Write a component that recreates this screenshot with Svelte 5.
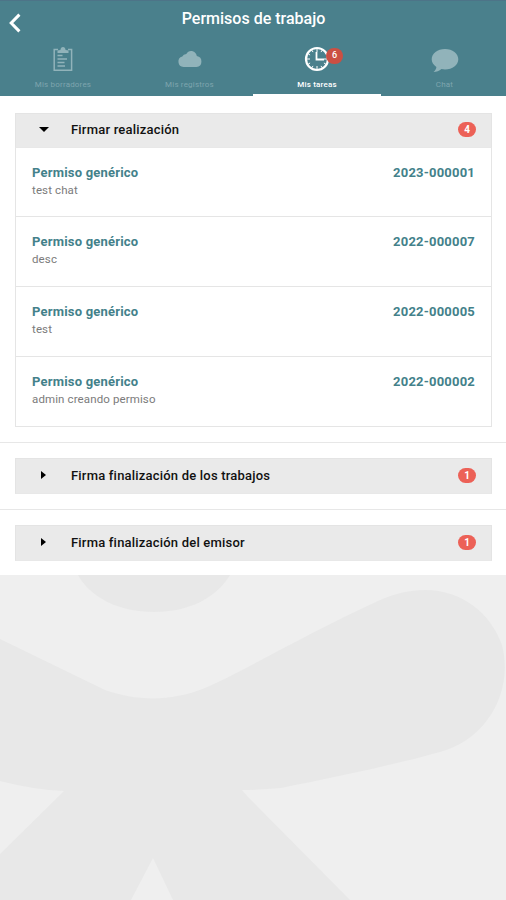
<script lang="ts">
  type Permit = { code: string; note: string };
  type Group = { title: string; count: number; open: boolean; permits: Permit[] };

  const tabs = [
    { id: 'drafts', label: 'Mis borradores', count: 0 },
    { id: 'records', label: 'Mis registros', count: 0 },
    { id: 'tasks', label: 'Mis tareas', count: 6 },
    { id: 'chat', label: 'Chat', count: 0 },
  ];

  let active = $state('tasks');

  let groups: Group[] = $state([
    {
      title: 'Firmar realización',
      count: 4,
      open: true,
      permits: [
        { code: '2023-000001', note: 'test chat' },
        { code: '2022-000007', note: 'desc' },
        { code: '2022-000005', note: 'test' },
        { code: '2022-000002', note: 'admin creando permiso' },
      ],
    },
    { title: 'Firma finalización de los trabajos', count: 1, open: false, permits: [] },
    { title: 'Firma finalización del emisor', count: 1, open: false, permits: [] },
  ]);
</script>

<div class="app">
  <header>
    <div class="bar">
      <button class="back" aria-label="Volver">
        <svg width="12" height="20" viewBox="0 0 12 20"><path d="M10.4 1.6 2.2 10l8.2 8.4" /></svg>
      </button>
      <h1>Permisos de trabajo</h1>
    </div>

    <nav>
      {#each tabs as tab (tab.id)}
        <button class="tab" class:active={active === tab.id} onclick={() => (active = tab.id)}>
          <span class="icon">
            {#if tab.id === 'drafts'}
              <svg width="20" height="26" viewBox="0 0 20 26">
                <path class="line" d="M5 3.5H1.2v20.8h17.4V3.5H15" />
                <path d="M4.5 7V4.400l2.900-.5C7.700 2 8.500 1 10 1s2.300 1 2.600 2.900l2.900.5V7z" />
                <path class="line" d="M4.500 9.500h5M4.500 13h9.500M4.500 16.500h7M4.500 20h7.500" />
              </svg>
            {:else if tab.id === 'records'}
              <svg width="24" height="26" viewBox="0 0 24 26">
                <path d="M5.500 21A5.300 5.300 0 0 1 4.300 10.600 4.400 4.400 0 0 1 8.300 7.900C9.400 6 11 5 13 5c3 0 5.400 2.200 5.800 5.100A5.500 5.500 0 0 1 18.500 21z" />
              </svg>
            {:else if tab.id === 'tasks'}
              <svg width="26" height="26" viewBox="0 0 26 26">
                <circle class="ring" cx="13" cy="13" r="11" />
                <path class="ticks" d="M13 3v3M13 20v3M3 13h3M20 13h3M8 4.300l1 1.800M18 4.300l-1 1.800M4.300 8l1.800 1M4.300 18l1.800-1M8 21.700l1-1.800M18 21.700l-1-1.800M21.700 18l-1.800-1" />
                <path class="hands" d="M12.500 6v7.500H20" />
              </svg>
            {:else}
              <svg width="28" height="26" viewBox="0 0 28 26">
                <path d="M14 3c7.500 0 13.300 4.600 13.300 10.300S21.500 23.500 14 23.500c-1.200 0-2.400-.1-3.500-.4-2.300 2-5 3-8 3 1.600-1.500 2.700-3 2.900-5.200C2.400 19 .700 16.300.700 13.300.700 7.600 6.500 3 14 3z" />
              </svg>
            {/if}
            {#if tab.count}<span class="badge">{tab.count}</span>{/if}
          </span>
          <span class="label">{tab.label}</span>
        </button>
      {/each}
    </nav>
  </header>

  <main>
    {#each groups as group (group.title)}
      <section>
        <button class="head" onclick={() => (group.open = !group.open)}>
          <span class="arrow" class:open={group.open}></span>
          <span class="title">{group.title}</span>
          <span class="count">{group.count}</span>
        </button>
        {#if group.open}
          <ul>
            {#each group.permits as permit (permit.code)}
              <li>
                <div class="row">
                  <span class="kind">Permiso genérico</span>
                  <span class="code">{permit.code}</span>
                </div>
                <p>{permit.note}</p>
              </li>
            {/each}
          </ul>
        {/if}
      </section>
    {/each}
  </main>

  <div class="backdrop">
    <svg width="506" height="325" viewBox="0 0 506 325">
      <path d="M78 0C91 23 119 37 154 37S216 23 230 0z" />
      <path d="M0 64 105 115C137 126 170 127 205 113C240 98 310 57 378 26C440 -2 487 28 502 70C514 118 486 165 440 177C390 191 330 203 281 213Q260 215 242 215L248 222 350 325H173L153 283 131 325H0V279L64 216Q35 215 0 206z" />
    </svg>
  </div>
</div>

<style>
  :global(body) {
    margin: 0;
  }

  .app {
    height: 900px;
    display: flex;
    flex-direction: column;
    overflow: hidden;
    background: #efefef;
    font-family: Roboto, 'Liberation Sans', sans-serif;
  }

  button {
    border: 0;
    padding: 0;
    margin: 0;
    background: none;
    font: inherit;
    color: inherit;
    cursor: pointer;
  }

  header {
    height: 96px;
    flex: none;
    box-sizing: border-box;
    display: flex;
    flex-direction: column;
    color: #fff;
    background: #4a808c;
    border-top: 1px solid #4d7488;
  }

  .bar {
    height: 41px;
    display: grid;
    grid-template-columns: 30px 1fr 29px;
    align-items: center;
  }

  .back {
    display: flex;
    padding: 2px 0 0 9px;
  }

  .back path {
    fill: none;
    stroke: #fff;
    stroke-width: 3;
  }

  h1 {
    margin: 0 0 5px;
    text-align: center;
    font-size: 16px;
    line-height: 20px;
    font-weight: 500;
  }

  nav {
    flex: 1;
    display: grid;
    grid-template-columns: 126px 127px 128px 127px;
  }

  .tab {
    display: flex;
    flex-direction: column;
    align-items: center;
    padding-top: 4px;
    border-bottom: 2px solid transparent;
    color: #91b3ba;
  }

  .tab.active {
    color: #fff;
    border-bottom-color: #fff;
  }

  .icon {
    position: relative;
    height: 26px;
  }

  .icon svg {
    display: block;
    overflow: visible;
    fill: currentColor;
  }

  .icon .line {
    fill: none;
    stroke: currentColor;
    stroke-width: 1.5;
  }

  .ring,
  .ticks,
  .hands {
    fill: none;
    stroke: currentColor;
    stroke-width: 2.2;
  }

  .ticks {
    stroke-width: 1;
  }

  .hands {
    stroke-width: 1.8;
  }

  .badge {
    position: absolute;
    top: 2px;
    left: 22px;
    width: 17px;
    height: 16px;
    border-radius: 8px;
    background: #cb4f43;
    font-size: 9px;
    line-height: 15px;
    font-weight: 500;
    text-align: center;
  }

  .label {
    margin-top: 8px;
    font-size: 8px;
    line-height: 10px;
    letter-spacing: 0.18px;
    color: #7ea5ae;
  }

  .active .label {
    color: #fff;
    font-weight: 500;
  }

  main {
    flex: none;
  }

  section {
    padding: 15px 14px 15px 15px;
    border-bottom: 1px solid #e7e7e7;
    background: #fff;
  }

  section:first-child {
    padding-top: 17px;
  }

  section:last-child {
    padding-bottom: 14px;
    border-bottom: 0;
  }

  .head {
    width: 100%;
    height: 35px;
    display: flex;
    align-items: center;
    padding: 0 15px 2px 25px;
    box-sizing: border-box;
    background: #eaeaea;
    border: 1px solid #e4e4e4;
    border-bottom-color: #e8e8e8;
    text-align: left;
  }

  section:not(:first-child) .head {
    height: 36px;
  }

  .arrow {
    width: 0;
    height: 0;
    margin: 0 25px 0 0;
    border-left: 5px solid #000;
    border-top: 4.5px solid transparent;
    border-bottom: 4.5px solid transparent;
  }

  .arrow.open {
    margin: 0 22px 0 -2px;
    border-top: 5px solid #000;
    border-bottom: 0;
    border-left: 5px solid transparent;
    border-right: 5px solid transparent;
  }

  .title {
    flex: 1;
    font-size: 13px;
    font-weight: 500;
    letter-spacing: 0.2px;
    color: #111;
  }

  .count {
    width: 18px;
    height: 15px;
    border-radius: 8px;
    background: #ec6157;
    color: #fff;
    font-size: 10px;
    line-height: 15px;
    font-weight: 700;
    text-align: center;
  }

  ul {
    list-style: none;
    margin: 0;
    padding: 0;
    border: solid #e5e5e5;
    border-width: 0 1px 1px;
  }

  li {
    height: 70px;
    box-sizing: border-box;
    padding: 16px 16px 0 16px;
  }

  li:first-child {
    height: 68px;
  }

  li + li {
    border-top: 1px solid #e5e5e5;
  }

  .row {
    display: flex;
    justify-content: space-between;
    font-size: 13px;
    line-height: 17px;
    font-weight: 700;
    letter-spacing: 0.2px;
    color: #43818a;
  }

  p {
    margin: 2px 0 0;
    font-size: 11.5px;
    line-height: 15px;
    letter-spacing: 0.12px;
    color: #7b7b7b;
  }

  .backdrop {
    flex: 1;
    overflow: hidden;
  }

  .backdrop svg {
    display: block;
    fill: #e8e8e8;
  }
</style>
